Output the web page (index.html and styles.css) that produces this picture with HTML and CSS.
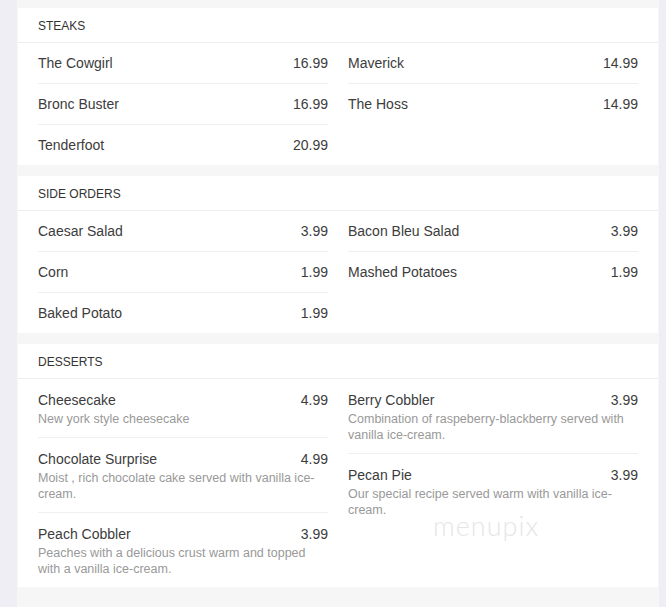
FILE: index.html
```html
<!DOCTYPE html>
<html>
<head>
<meta charset="utf-8">
<link rel="stylesheet" href="styles.css">
</head>
<body>
<div class="page">
  <section class="card">
    <div class="card-head">STEAKS</div>
    <div class="cols">
      <div class="col">
        <div class="item"><div class="line"><span>The Cowgirl</span><span>16.99</span></div></div>
        <div class="item"><div class="line"><span>Bronc Buster</span><span>16.99</span></div></div>
        <div class="item"><div class="line"><span>Tenderfoot</span><span>20.99</span></div></div>
      </div>
      <div class="col">
        <div class="item"><div class="line"><span>Maverick</span><span>14.99</span></div></div>
        <div class="item"><div class="line"><span>The Hoss</span><span>14.99</span></div></div>
      </div>
    </div>
  </section>
  <section class="card">
    <div class="card-head">SIDE ORDERS</div>
    <div class="cols">
      <div class="col">
        <div class="item"><div class="line"><span>Caesar Salad</span><span>3.99</span></div></div>
        <div class="item"><div class="line"><span>Corn</span><span>1.99</span></div></div>
        <div class="item"><div class="line"><span>Baked Potato</span><span>1.99</span></div></div>
      </div>
      <div class="col">
        <div class="item"><div class="line"><span>Bacon Bleu Salad</span><span>3.99</span></div></div>
        <div class="item"><div class="line"><span>Mashed Potatoes</span><span>1.99</span></div></div>
      </div>
    </div>
  </section>
  <section class="card card-desserts">
    <div class="card-head">DESSERTS</div>
    <div class="cols">
      <div class="col">
        <div class="item has-desc"><div class="line"><span>Cheesecake</span><span>4.99</span></div><p class="desc">New york style cheesecake</p></div>
        <div class="item has-desc"><div class="line"><span>Chocolate Surprise</span><span>4.99</span></div><p class="desc">Moist , rich chocolate cake served with vanilla ice-cream.</p></div>
        <div class="item has-desc"><div class="line"><span>Peach Cobbler</span><span>3.99</span></div><p class="desc">Peaches with a delicious crust warm and topped with a vanilla ice-cream.</p></div>
      </div>
      <div class="col">
        <div class="item has-desc"><div class="line"><span>Berry Cobbler</span><span>3.99</span></div><p class="desc">Combination of raspeberry-blackberry served with vanilla ice-cream.</p></div>
        <div class="item has-desc"><div class="line"><span>Pecan Pie</span><span>3.99</span></div><p class="desc">Our special recipe served warm with vanilla ice-cream.</p></div>
      </div>
    </div>
    <div class="watermark">menupix</div>
  </section>
</div>
</body>
</html>
```
FILE: styles.css
```css
html, body {
  margin: 0;
  padding: 0;
}
body {
  background: #eeeef4;
  font-family: "Liberation Sans", Arial, sans-serif;
  color: #3a3a3a;
  height: 607px;
}
.page {
  margin-left: 17px;
  width: 642px;
  padding: 8px 0 0 1px;
  box-sizing: border-box;
  background: #f6f6f7;
  min-height: 607px;
  display: flex;
  flex-direction: column;
  gap: 11px;
}
.card {
  width: 640px;
  background: #fff;
  position: relative;
}
.card-head {
  padding: 10px 20px 8px;
  font-size: 12px;
  line-height: 16px;
  color: #333;
  border-bottom: 1px solid #eeeeee;
}
.cols {
  display: grid;
  grid-template-columns: 290px 290px;
  column-gap: 20px;
  padding: 0 20px;
}
.item {
  padding: 12px 0;
  border-bottom: 1px solid #efefef;
}
.item:last-child {
  border-bottom: none;
}
.item.has-desc {
  padding-top: 13px;
  padding-bottom: 10px;
}
.line {
  display: flex;
  justify-content: space-between;
  font-size: 14px;
  line-height: 16px;
  color: #3c3c3c;
}
.desc {
  margin: 3px 0 0;
  font-size: 12.5px;
  line-height: 16px;
  color: #999;
}
.watermark {
  position: absolute;
  left: 415px;
  top: 175px;
  font-family: Lato, "Open Sans", sans-serif;
  font-weight: 300;
  font-size: 27px;
  line-height: 14px;
  letter-spacing: 1px;
  color: #e6e6e6;
  pointer-events: none;
}
```
